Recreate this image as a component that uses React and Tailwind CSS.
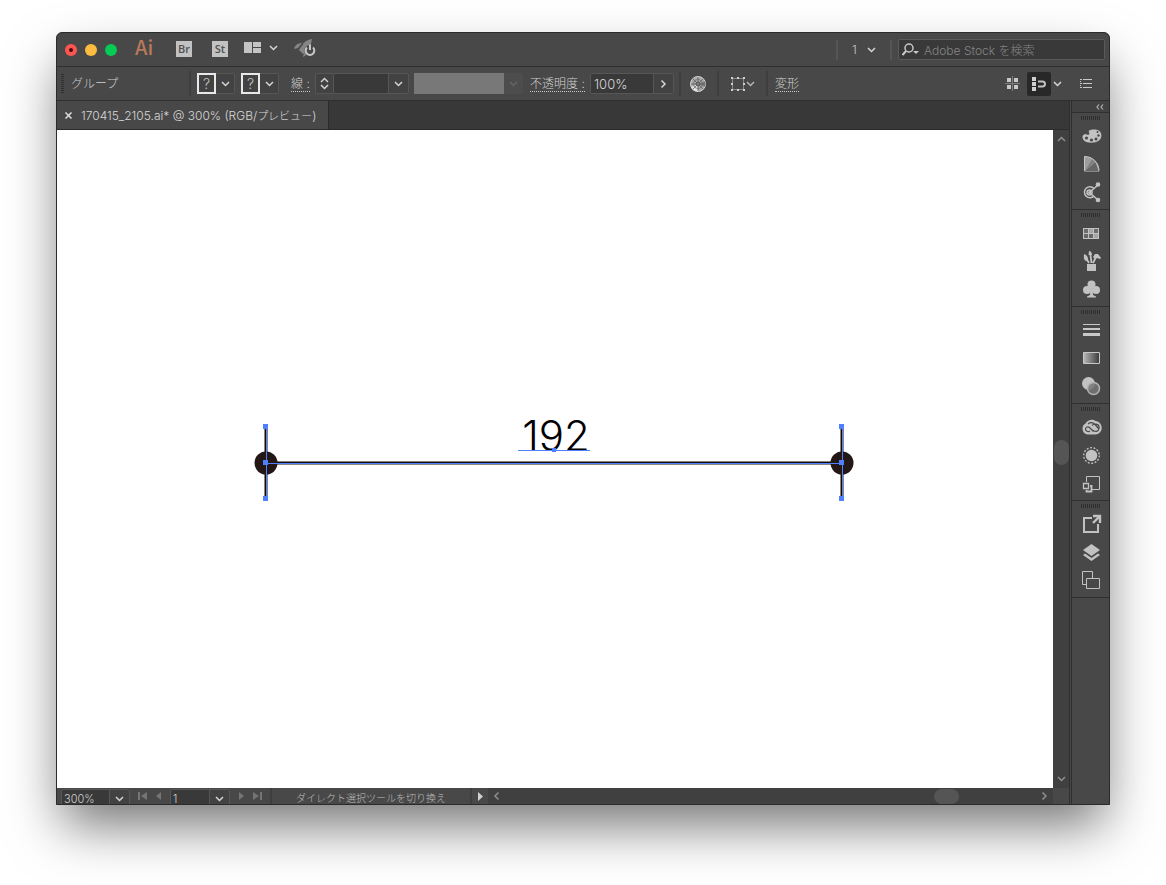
import React, { useState } from 'react';

const Caret = ({ className = 'text-[#d6d6d6]' }) => (
  <svg width="9" height="6" viewBox="0 0 9 6" className={className} fill="none" stroke="currentColor" strokeWidth="1.5">
    <path d="M1 1l3.500 3.500L8 1" />
  </svg>
);

const Divider = () => <span className="w-0.5 h-[25px] bg-[#3e3e3e]" />;

// Select with its own arrow cell on the right
const Dropdown = ({ label, options, className, value, onChange }) => (
  <div className={`relative flex border border-[#565656] rounded-xs bg-[#393939] ${className}`}>
    <select
      aria-label={label}
      value={value}
      onChange={(e) => onChange && onChange(e.target.value)}
      className="w-full h-full pl-0.5 appearance-none bg-transparent outline-none text-[#d0d0d0]"
    >
      {options.map((o) => <option key={o} value={o}>{o}</option>)}
    </select>
    <span className="absolute inset-y-0 right-0 w-5 flex items-center justify-center bg-[#424242] border-l border-[#565656] pointer-events-none">
      <Caret />
    </span>
  </div>
);

const Swatch = ({ label }) => (
  <button type="button" aria-label={label} className="flex h-[21px] rounded-xs">
    <span className="w-[19px] h-full border-2 border-[#e8e8e8] bg-[#424242] text-[#c4c4c4] text-sm leading-[17px] text-center">?</span>
    <span className="w-[19px] h-full flex items-center justify-center border border-l-0 border-[#565656] bg-[#424242] rounded-r-xs"><Caret /></span>
  </button>
);

const Badge = ({ children }) => (
  <button type="button" className="w-4 h-4 bg-[#c2c2c2] text-[#505050] text-[11px] leading-4 font-semibold font-['Open_Sans','Noto_Sans',sans-serif]">{children}</button>
);

const TitleBar = () => (
  <header className="flex items-center h-[34px] bg-[#484848] border-b border-[#2f2f2f] pl-2 pr-1">
    <div className="flex gap-2 mr-[18px]">
      <button type="button" aria-label="閉じる" className="w-3 h-3 rounded-full bg-[#fc5652] flex items-center justify-center">
        <span className="w-1 h-1 rounded-full bg-[#450807]" />
      </button>
      <button type="button" aria-label="しまう" className="w-3 h-3 rounded-full bg-[#fdbc40]" />
      <button type="button" aria-label="拡大" className="w-3 h-3 rounded-full bg-[#04ca56]" />
    </div>
    <span className="w-[41px] pb-1.5 text-xl leading-6 font-medium text-[#b8795c] font-['Noto_Sans_CJK_JP',sans-serif]">Ai</span>
    <div className="flex items-center gap-5 pb-px">
      <Badge>Br</Badge>
      <Badge>St</Badge>
    </div>
    <button type="button" aria-label="ドキュメントレイアウト" className="ml-4 pb-1 flex items-center gap-2 text-[#c8c8c8]">
      <svg width="17" height="11" viewBox="0 0 17 11" fill="#c4c4c4">
        <path d="M0 0h8v11H0zM9 0h8v5H9zM9 6h8v5H9z" />
      </svg>
      <Caret />
    </button>
    <button type="button" aria-label="GPU パフォーマンス" className="ml-4 pb-1">
      <svg width="23" height="18" viewBox="0 0 23 18">
        <path d="M18 0C12 1 7 5 5 11l4 4c5-3 8-8 9-15z" fill="#858585" />
        <path d="M8 4C4 4 1 6 0 10l4-1zM10 14l-1 4c2-1 4-2 5-5z" fill="#858585" />
        <path d="M4 11l5-6" stroke="#484848" />
        <circle cx="16" cy="11.500" r="5.500" fill="#484848" />
        <path d="M13 8.500a4.300 4.300 0 1 0 6 0M16 5.500v5.500" stroke="#c8c8c8" strokeWidth="2" fill="none" />
      </svg>
    </button>

    <div className="ml-auto flex items-center">
      <span className="w-0.5 h-5 bg-[#565656] mr-3" />
      <div className="relative w-[26px] flex items-center">
        <select aria-label="ワークスペース" className="w-full pl-0.5 appearance-none bg-transparent outline-none text-[#c8c8c8] text-xs">
          <option>1</option>
        </select>
        <span className="absolute right-0 pointer-events-none"><Caret /></span>
      </div>
      <span className="w-0.5 h-5 bg-[#565656] ml-[14px] mr-1.5" />
      <label className="flex items-center w-[207px] h-[21px] border border-[#5a5a5a] rounded-xs bg-[#393939] pl-[3px]">
        <svg width="18" height="13" viewBox="0 0 18 13" fill="none" className="shrink-0 mr-1">
          <circle cx="7" cy="5" r="4" stroke="#c8c8c8" strokeWidth="1.500" />
          <path d="M4 8l-3.500 4" stroke="#c8c8c8" strokeWidth="2" />
          <path d="M11 8h6l-3 3z" fill="#c8c8c8" />
        </svg>
        <input aria-label="Adobe Stock を検索" placeholder="Adobe Stock を検索" className="min-w-0 flex-1 pt-0.5 bg-transparent outline-none text-[#d0d0d0] placeholder:text-[#858585]" />
      </label>
    </div>
  </header>
);

const ControlBar = () => {
  const [opacity, setOpacity] = useState('100%');

  return (
    <div className="flex items-center h-[34px] bg-[#484848] border-b border-[#2f2f2f] pl-1 pr-4 text-[#d0d0d0]">
      <span className="w-[3px] h-5 mr-[7px] bg-[repeating-linear-gradient(#2f2f2f_0_1px,transparent_1px_2px)]" />
      <span className="w-[118px] text-xs">グループ</span>
      <Divider />
      <div className="flex gap-1.5 ml-1.5">
        <Swatch label="塗り" />
        <Swatch label="線" />
      </div>
      <button type="button" className="ml-3 w-[19px] pt-0.5 leading-[14px] text-left text-xs whitespace-nowrap border-b border-dotted border-[#c8c8c8]">線 :</button>
      <div className="ml-[5px] flex h-[21px]">
        <button type="button" aria-label="線幅の増減" className="w-[18px] flex flex-col items-center justify-between py-[3px] border border-r-0 border-[#565656] rounded-l-xs bg-[#424242]">
          <Caret className="rotate-180" />
          <Caret />
        </button>
        <Dropdown label="線幅" options={['']} className="w-[76px]" />
      </div>
      <button type="button" aria-label="グラフィックスタイル" disabled className="ml-[5px] h-[21px] flex">
        <span className="w-[90px] h-full bg-[#787878]" />
        <span className="w-[19px] h-full flex items-center justify-center bg-[#4d4d4d] rounded-r-xs"><Caret className="text-[#646464]" /></span>
      </button>
      <label htmlFor="opacity" className="ml-[7px] w-[55px] pt-0.5 leading-[14px] text-xs whitespace-nowrap border-b border-dotted border-[#c8c8c8]">不透明度 :</label>
      <div className="ml-[5px] flex w-[84px] h-[21px] border border-[#565656] rounded-xs bg-[#393939]">
        <input
          id="opacity"
          value={opacity}
          onChange={(e) => setOpacity(e.target.value)}
          className="min-w-0 flex-1 pl-[3px] pt-0.5 bg-transparent outline-none text-[13px] text-[#d6d6d6]"
        />
        <button type="button" aria-label="不透明度スライダー" className="w-5 flex items-center justify-center bg-[#424242] border-l border-[#565656]">
          <Caret className="-rotate-90 text-[#d6d6d6]" />
        </button>
      </div>
      <span className="ml-[5px] flex"><Divider /></span>
      <button type="button" aria-label="オブジェクトを再配色" className="ml-2 mr-[10px]">
        <svg width="18" height="18" viewBox="0 0 18 18">
          <circle cx="9" cy="9" r="7.500" fill="#a8a8a8" stroke="#d4d4d4" />
          <path d="M9 9L2 12a7.500 7.500 0 0 0 7 4.500z" fill="#e0e0e0" />
          <path d="M9 9l7 3a7.500 7.500 0 0 0 0-6z" fill="#7d7d7d" />
          <path d="M9 2v14M2 9h14M4 4l10 10M14 4L4 14" stroke="#5e5e5e" strokeWidth=".8" />
          <circle cx="9" cy="9" r="4.500" fill="none" stroke="#6a6a6a" strokeWidth=".7" />
          <circle cx="9" cy="9" r="2" fill="#7a7a7a" stroke="#4a4a4a" strokeWidth=".7" />
        </svg>
      </button>
      <Divider />
      <button type="button" aria-label="選択オプション" className="ml-3 mr-[11px] flex items-center gap-px">
        <svg width="14" height="14" viewBox="0 0 14 14" fill="#d0d0d0">
          <path d="M1.500 1.500h11v11h-11z" fill="none" stroke="#8a8a8a" />
          <path d="M0 0h2v2H0zM6 0h2v2H6zM12 0h2v2h-2zM0 6h2v2H0zM12 6h2v2h-2zM0 12h2v2H0zM6 12h2v2H6zM12 12h2v2h-2z" />
        </svg>
        <Caret className="text-[#b4b4b4]" />
      </button>
      <Divider />
      <button type="button" className="ml-[7px] pt-0.5 text-xs leading-[14px] border-b border-dotted border-[#c8c8c8]">変形</button>

      <div className="ml-auto flex items-center">
        <button type="button" aria-label="ピクセルグリッドに整合">
          <svg width="15" height="15" viewBox="0 0 15 15" fill="#c8c8c8">
            <path d="M2 2h4v4H2zM9 2h4v4H9zM2 9h4v4H2zM9 9h4v4H9z" />
            <path d="M7.500 0v15M0 7.500h15" stroke="#7c7c7c" />
          </svg>
        </button>
        <button type="button" aria-label="スナップ" className="ml-[7px] w-6 h-6 flex items-center justify-center bg-[#282828] rounded-xs">
          <svg width="15" height="14" viewBox="0 0 15 14" fill="#d0d0d0">
            <path d="M0 0h4v4H0zM0 5h4v4H0zM0 10h4v4H0z" />
            <path d="M6 4.500h4.500a2.500 2.500 0 0 1 0 5H6" fill="none" stroke="#c0c0c0" strokeWidth="2" />
          </svg>
        </button>
        <span className="ml-0.5 mr-[18px]"><Caret /></span>
        <button type="button" aria-label="パネルメニュー" className="mr-px">
          <svg width="12" height="9" viewBox="0 0 12 9" fill="#c8c8c8">
            <path d="M0 0h2v1H0zM3 0h9v1H3zM0 4h2v1H0zM3 4h9v1H3zM0 8h2v1H0zM3 8h9v1H3zM0 2h1v1H0zM0 6h1v1H0z" />
          </svg>
        </button>
      </div>
    </div>
  );
};

// Selected dimension line with its anchors
const Artwork = () => (
  <svg className="absolute left-0 top-0" width="996" height="658" viewBox="0 0 996 658">
    <path d="M209 331h576v4H209zM207 296h4v73h-4zM783 296h4v73h-4z" fill="#8c8680" />
    <path d="M209 332h576v1H209zM208 296h1v73h-1zM784 296h1v73h-1z" fill="#120a08" />
    <circle cx="209" cy="333" r="11.500" fill="#231815" />
    <circle cx="785" cy="333" r="11.500" fill="#231815" />
    <path d="M209 333h576v1H209zM209 296h1v73h-1zM785 296h1v73h-1z" fill="#4f80ff" />
    <path d="M206 294h5v5h-5zM206 330h5v5h-5zM206 366h5v5h-5zM782 294h5v5h-5zM782 330h5v5h-5zM782 366h5v5h-5z" fill="#4f80ff" />
    <text x="499" y="321" textAnchor="middle" fontSize="42" className="font-light font-['Inter','Noto_Sans_CJK_JP',sans-serif]" fill="#000">192</text>
    <path d="M461 320h72v1h-72zM495 318h4v4h-4z" fill="#4f80ff" />
  </svg>
);

const dockGroups = [
  [
    {
      label: 'カラー',
      icon: (
        <g transform="translate(0 1.5)">
          <path fillRule="evenodd" d="M8 3c2-1 8-2 11 1 2 2 2 7-1 9-4 3-12 3-15 0-2-2-2-5 0-6 2-1 4 1 5 0 1-2-1-3 0-4z" fill="#c2c2c2" />
          <g fill="#484848"><circle cx="16.500" cy="4.500" r="1" /><circle cx="17.500" cy="8" r="1.200" /><circle cx="15" cy="11.500" r="1.500" /><circle cx="10.500" cy="12.500" r="1.600" /><circle cx="5.500" cy="10.500" r="1.600" /></g>
        </g>
      ),
    },
    {
      label: 'カラーガイド',
      icon: (
        <>
          <path d="M3.500 2.500c8 0 14.500 6 14.500 14.500H3.500z" fill="#9e9e9e" stroke="#c8c8c8" />
          <path d="M4 17L11 5l3.500 3.500z" fill="#828282" />
          <path d="M4 17l10.500-8.500 3 8.500z" fill="#666" />
        </>
      ),
    },
    {
      label: 'カラーテーマ',
      icon: (
        <>
          <g fill="none" stroke="#c2c2c2" strokeWidth="1.500"><path d="M13 6.500A5.500 5.500 0 1 0 13 14" /><circle cx="8.500" cy="10.500" r="2.500" /><path d="M9 10l8-7M9 11l8 7" /></g>
          <g fill="#c2c2c2"><circle cx="17" cy="2.500" r="2.300" /><circle cx="17" cy="18" r="2.300" /><circle cx="8.500" cy="10.500" r="1.500" /></g>
        </>
      ),
    },
  ],
  [
    {
      label: 'スウォッチ',
      icon: (
        <>
          <path d="M2 5h16v11H2z" fill="#c2c2c2" />
          <path d="M3 6h4v4H3zM13 6h4v4h-4z" fill="#6c6c6c" />
          <path d="M3 11h4v4H3zM8 11h4v4H8z" fill="#686868" />
          <path d="M8 6h4v4H8zM13 11h4v4h-4z" fill="#a6a6a6" />
        </>
      ),
    },
    {
      label: 'ブラシ',
      icon: (
        <>
          <path d="M6 13h9v7H6z" fill="#c2c2c2" />
          <path d="M8 12L4.500 6M10.500 12L9.500 4M12 12l3-6" stroke="#c2c2c2" strokeWidth="1.800" />
          <path d="M3 3c2 1 4 2 4 5 0 2-1 2-2 2-3-2-2-4-2-7zM8 0c2 0 3 2 3 4H7.500zM12 6l2-3h3l3 4-1 1-3-1-2 1z" fill="#c2c2c2" />
        </>
      ),
    },
    {
      label: 'シンボル',
      icon: (
        <g fill="#c2c2c2"><circle cx="10.500" cy="5.500" r="4" /><circle cx="6" cy="11" r="4" /><circle cx="15" cy="11" r="4" /><path d="M9.500 8h2l.5 8 3 1.500v1H6v-1L9 16z" /></g>
      ),
    },
  ],
  [
    { label: '線', icon: <path d="M2 4h17v1H2zM2 8h17v2H2zM2 13h17v3H2z" fill="#c8c8c8" /> },
    {
      label: 'グラデーション',
      icon: (
        <>
          <defs><linearGradient id="dock-grad"><stop stopColor="#b8b8b8" /><stop offset="1" stopColor="#3a3a3a" /></linearGradient></defs>
          <path d="M2.500 4.500h16v11h-16z" fill="url(#dock-grad)" stroke="#c8c8c8" />
        </>
      ),
    },
    {
      label: '透明',
      icon: (
        <>
          <circle cx="7.500" cy="7.500" r="6.500" fill="#c2c2c2" />
          <circle cx="12.500" cy="12.500" r="6" fill="#777" fillOpacity=".85" stroke="#b4b4b4" strokeWidth="1.500" />
        </>
      ),
    },
  ],
  [
    {
      label: 'CC ライブラリ',
      icon: (
        <>
          <path d="M6 17.500A6 6 0 0 1 4.500 6.500C7 2 12.500 2 14.500 4c8.500 1 8 13 0 13.500z" fill="#c2c2c2" />
          <path d="M12.500 14.500L9 11c-2-2-4.500-1-4.500 1s2.500 3.500 4.500 2M7 7c3-2.500 6-.5 7.500 1l3 3.500M11 8.500c3-3 8-1 7 3-.5 3-4 4-6 1.500" fill="none" stroke="#484848" strokeWidth="1.200" />
        </>
      ),
    },
    {
      label: 'アピアランス',
      icon: (
        <>
          <circle cx="10.500" cy="10.500" r="5.800" fill="#c2c2c2" />
          <circle cx="10.500" cy="10.500" r="7.800" fill="none" stroke="#c2c2c2" strokeWidth="1.300" strokeDasharray="2 1.500" />
        </>
      ),
    },
    {
      label: 'グラフィックスタイル',
      icon: (
        <g fill="none" stroke="#c2c2c2">
          <path d="M5.500 9V3.500h13v13H11" />
          <path d="M2.500 10.500h5v5h-5z" strokeWidth="1.300" />
          <path d="M9 13h1.500v5.500h-5V17" strokeWidth="1.800" />
        </g>
      ),
    },
  ],
  [
    {
      label: 'アセットの書き出し',
      icon: (
        <g fill="none" stroke="#c2c2c2" strokeWidth="2"><path d="M11 4H3v14h14v-8" /><path d="M12 2h7v7M18.500 2.500L12 9" strokeWidth="2.400" /></g>
      ),
    },
    { label: 'レイヤー', icon: <path d="M10.500 2l8.500 6-8.500 6L2 8zM4 11.500l6.500 4.500 6.500-4.500 2 1.500-8.500 6L2 13z" fill="#c2c2c2" /> },
    {
      label: 'アートボード',
      icon: (
        <g fill="none" stroke="#c2c2c2"><path d="M5 14.500H1.500v-13h10V8" /><path d="M5.500 8.500h13v10h-13z" /></g>
      ),
    },
  ],
];

const Dock = () => (
  <aside className="w-10 shrink-0 bg-[#484848] border-l-3 border-double border-[#2f2f2f]">
    <div className="h-3 flex items-center justify-end pr-[5px] bg-[#424242] border-b border-[#2f2f2f]">
      <button type="button" aria-label="パネルを展開">
        <svg width="8" height="6" viewBox="0 0 8 6" fill="none" stroke="#b4b4b4" strokeWidth="1.200" className="block"><path d="M3 .5L1 3l2 2.500M7 .5L5 3l2 2.500" /></svg>
      </button>
    </div>
    {dockGroups.map((group, i) => (
      <div key={i} className="flex flex-col items-center pt-[3px] pb-[3px] border-b border-[#2f2f2f]">
        <span className="w-5 h-1 mb-0.5 bg-[repeating-linear-gradient(90deg,#2f2f2f_0_1px,transparent_1px_2px)]" />
        {group.map((item) => (
          <button key={item.label} type="button" aria-label={item.label} className="h-7 pl-0.5 flex items-center">
            <svg width="21" height="21" viewBox="0 0 21 21">{item.icon}</svg>
          </button>
        ))}
      </div>
    ))}
  </aside>
);

const StatusBar = () => {
  const [zoom, setZoom] = useState('300%');

  return (
    <footer className="flex h-4 bg-[#484848] text-[11px] text-[#c8c8c8] overflow-hidden">
      <Dropdown label="ズーム" options={['100%', '200%', '300%']} value={zoom} onChange={setZoom} className="ml-1 mt-px w-[69px] h-5" />
      <div className="flex items-center gap-[9px] pl-2 w-10 text-[#757575]">
        <button type="button" aria-label="最初"><svg width="9" height="8" viewBox="0 0 9 8" fill="currentColor"><path d="M0 0h2v8H0zM9 0v8L3 4z" /></svg></button>
        <button type="button" aria-label="前へ"><svg width="5" height="8" viewBox="0 0 5 8" fill="currentColor"><path d="M5 0v8L0 4z" /></svg></button>
      </div>
      <Dropdown label="アートボード" options={['1']} className="mt-px w-[60px] h-5" />
      <div className="flex items-center gap-[9px] pl-[9px] w-[42px] text-[#757575] border-r-2 border-[#3e3e3e]">
        <button type="button" aria-label="次へ"><svg width="5" height="8" viewBox="0 0 5 8" fill="currentColor"><path d="M0 0v8l5-4z" /></svg></button>
        <button type="button" aria-label="最後"><svg width="9" height="8" viewBox="0 0 9 8" fill="currentColor"><path d="M7 0h2v8H7zM0 0v8l6-4z" /></svg></button>
      </div>
      <p className="w-[200px] pt-0.5 text-[10px] leading-4 text-center text-[#bcbcbc] whitespace-nowrap border-r-2 border-[#3e3e3e]">ダイレクト選択ツールを切り換え</p>
      <button type="button" aria-label="ステータスメニュー" className="w-4 flex items-center justify-center">
        <svg width="5" height="9" viewBox="0 0 5 9" fill="#d0d0d0"><path d="M0 0v9l5-4.500z" /></svg>
      </button>
      <div className="flex-1 flex items-center bg-[#404040] px-1 text-[#8f8f8f]">
        <Caret className="rotate-90" />
        <span className="ml-auto mr-[81px] w-[25px] h-[15px] rounded-full bg-[#555]" />
        <Caret className="-rotate-90" />
      </div>
      <span className="w-4" />
    </footer>
  );
};

const App = () => (
  <div className="min-h-screen flex flex-col px-14 pt-8 pb-20 bg-white overflow-hidden text-xs font-light font-['Inter','Noto_Sans_CJK_JP',sans-serif]">
    <div className="flex-1 flex flex-col border border-[#2b2b2b] rounded-t-md bg-[#383838] shadow-[0_26px_50px_-6px_rgba(0,0,0,0.55)]">
      <div className="rounded-t-md overflow-hidden">
        <TitleBar />
        <ControlBar />
      </div>
      <div className="flex-1 flex">
        <div className="flex-1 min-w-0 flex flex-col">
          <div className="flex h-[29px] bg-[#383838] border-b border-[#2b2b2b]">
            <div className="flex items-center gap-[9px] pl-2 pr-3 bg-[#484848] border-r border-[#2b2b2b] text-[#d8d8d8] whitespace-nowrap">
              <button type="button" aria-label="タブを閉じる">
                <svg width="7" height="7" viewBox="0 0 7 7" stroke="#e0e0e0" strokeWidth="1.500"><path d="M.5.5l6 6M6.500.5l-6 6" /></svg>
              </button>
              <span className="pt-0.5">170415_2105.ai* @ 300% (RGB/<span className="text-[11px]">プレビュー</span>)</span>
            </div>
          </div>
          <main className="flex-1 flex bg-white">
            <div className="relative flex-1 overflow-hidden">
              <Artwork />
            </div>
            <div className="w-4 flex flex-col items-center py-1.5 bg-[#404040] text-[#8f8f8f]">
              <Caret className="rotate-180" />
              <span className="flex-[24]" />
              <span className="w-[15px] h-[25px] rounded-full bg-[#555]" />
              <span className="flex-[25]" />
              <Caret className="text-[#8f8f8f]" />
            </div>
          </main>
          <StatusBar />
        </div>
        <Dock />
      </div>
    </div>
  </div>
);

export default App;
